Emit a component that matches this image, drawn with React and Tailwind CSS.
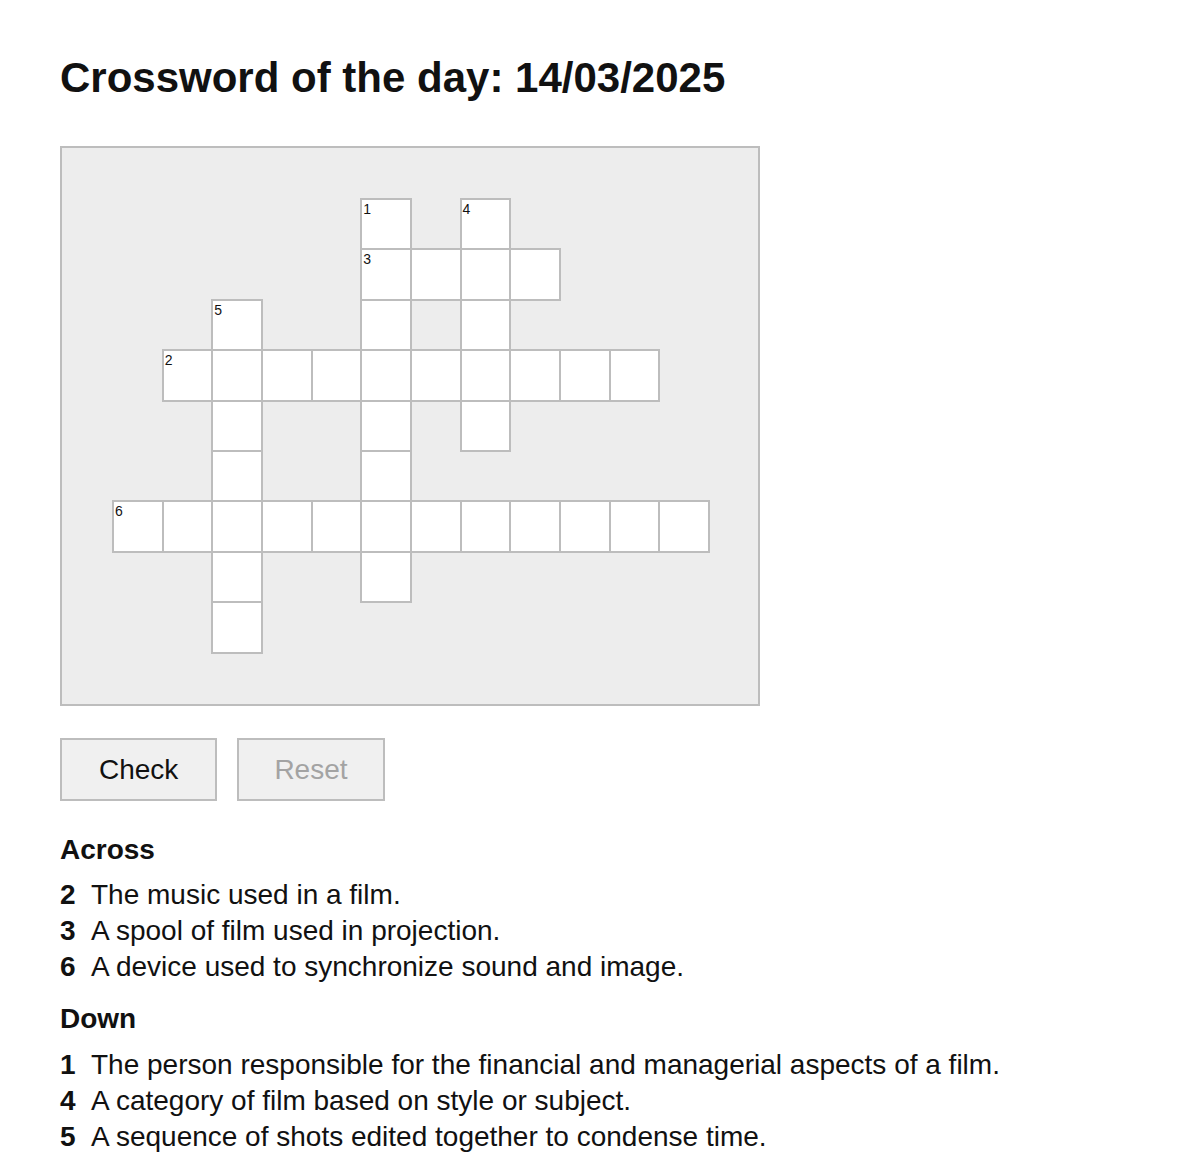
const layout = [
  ".....#.#....",
  ".....####...",
  "..#..#.#....",
  ".##########.",
  "..#..#.#....",
  "..#..#......",
  "############",
  "..#..#......",
  "..#.........",
  "............",
];

const numbers = {
  "0-5": 1,
  "0-7": 4,
  "1-5": 3,
  "2-2": 5,
  "3-1": 2,
  "6-0": 6,
};

const across = [
  [2, "The music used in a film."],
  [3, "A spool of film used in projection."],
  [6, "A device used to synchronize sound and image."],
];

const down = [
  [1, "The person responsible for the financial and managerial aspects of a film."],
  [4, "A category of film based on style or subject."],
  [5, "A sequence of shots edited together to condense time."],
];

function Cell({ active, number }) {
  return (
    <div className="w-full h-full">
      {active && (
        <div className="relative w-[calc(100%+2px)] h-[calc(100%+2px)] border-2 border-[#bdbdbd] bg-white">
          {number && (
            <span className="absolute top-[2px] left-[1px] text-[14px] leading-none text-[#111]">
              {number}
            </span>
          )}
        </div>
      )}
    </div>
  );
}

function ClueList({ title, clues, listGap }) {
  return (
    <section>
      <h2 className="text-[28px] leading-[36px] font-bold">{title}</h2>
      <ul className={listGap}>
        {clues.map(([n, text]) => (
          <li key={n} className="flex text-[28px] leading-[36px]">
            <span className="w-[31px] font-bold">{n}</span>
            <span>{text}</span>
          </li>
        ))}
      </ul>
    </section>
  );
}

export default function App() {
  return (
    <div className="min-h-screen bg-white px-[60px] pt-[54px] pb-[20px] text-[#111] font-['Liberation_Sans',Arial,sans-serif]">
      <h1 className="text-[42px] leading-[48px] font-bold">Crossword of the day: 14/03/2025</h1>

      {/* Grid */}
      <div className="mt-[44px] w-[700px] h-[560px] border-2 border-[#bdbdbd] bg-[#ededed] pt-[50px] pl-[50px]">
        <div className="grid grid-cols-[repeat(12,49.67px)] grid-rows-[repeat(10,50.4px)]">
          {layout.map((row, r) =>
            row.split("").map((ch, c) => (
              <Cell key={`${r}-${c}`} active={ch === "#"} number={numbers[`${r}-${c}`]} />
            ))
          )}
        </div>
      </div>

      {/* Buttons */}
      <div className="mt-[32px] flex gap-[20px]">
        <button className="h-[63px] px-[37px] border-2 border-[#bdbdbd] bg-[#f0f0f0] text-[28px] text-[#111]">
          Check
        </button>
        <button disabled className="h-[63px] px-[35px] border-2 border-[#bdbdbd] bg-[#f0f0f0] text-[28px] text-[#a3a3a3]">
          Reset
        </button>
      </div>

      <div className="mt-[31px]">
        <ClueList title="Across" clues={across} listGap="mt-[9px]" />
      </div>
      <div className="mt-[16px]">
        <ClueList title="Down" clues={down} listGap="mt-[10px]" />
      </div>
    </div>
  );
}
